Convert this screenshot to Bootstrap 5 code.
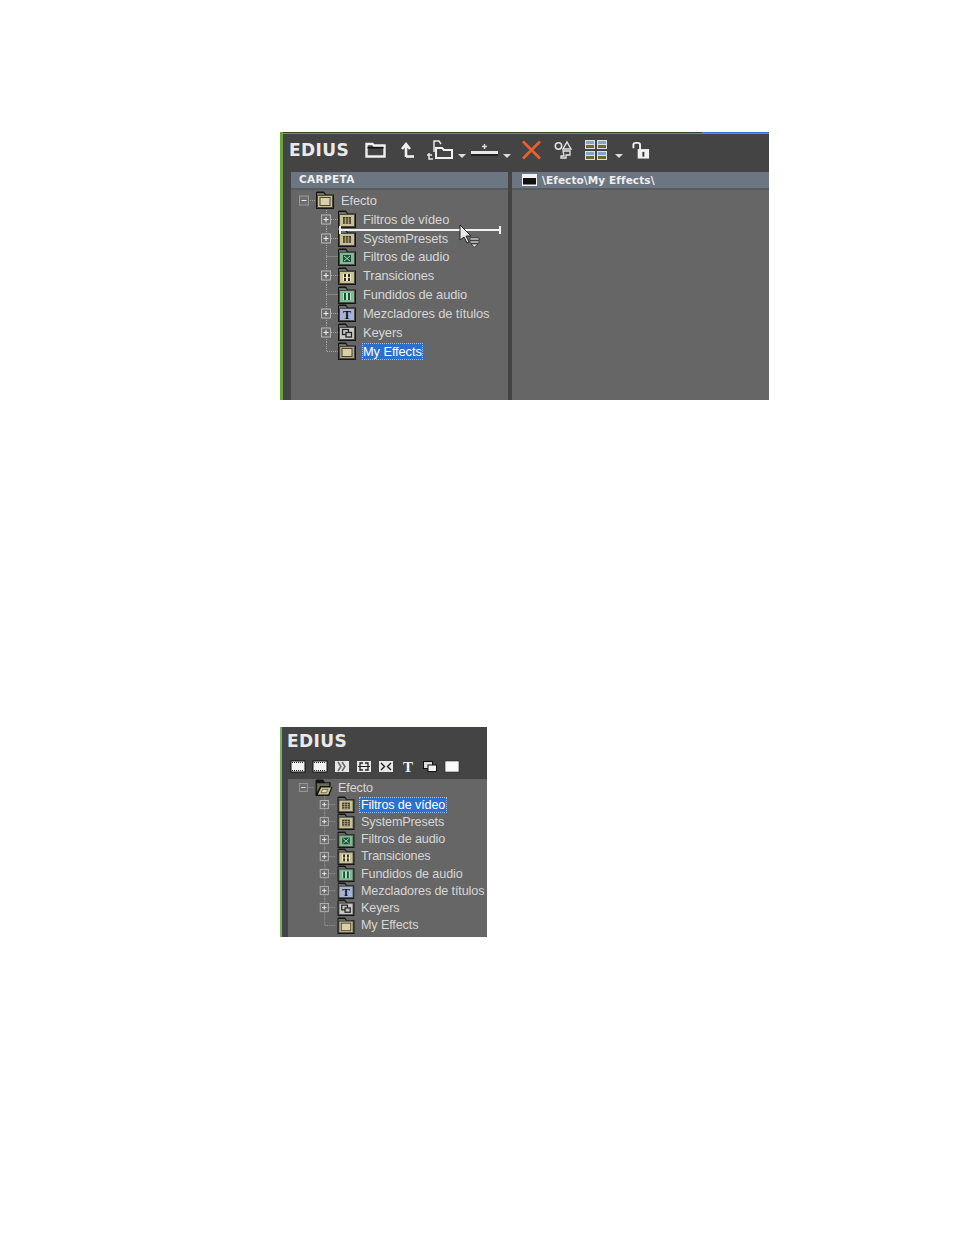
<!DOCTYPE html>
<html lang="es">
<head>
<meta charset="utf-8">
<title>EDIUS</title>
<link rel="stylesheet" href="https://cdn.jsdelivr.net/npm/bootstrap@5.3.0/dist/css/bootstrap.min.css">
<style>
body{background:#fff;margin:0;font-family:"Liberation Sans",Arial,sans-serif}
.shot{background:#444;border-left:3px solid #6aa636;margin-left:280px;overflow:hidden}
.shot-a{width:489px;height:268px;margin-top:132px}
.shot-b{width:207px;height:210px;margin-top:327px;border-left:2px solid #7fae62}
.edge{height:2px}
.edge-a{background:linear-gradient(to bottom,#3a4028 0 1px,#76955c 1px);width:100%}
.edge-a i{display:block;height:1px;width:67px;margin-left:auto;background:#2f78d0}
.edge-b{height:1px;background:#3d4a34}
.logo{font-family:"DejaVu Sans",sans-serif;font-weight:700;font-size:17px;letter-spacing:.4px;color:#eaeaea;line-height:1}
.bar-a{height:38px;padding:0 0 6px 6px}
.bar-b{height:51px}
.bar-b .logo{padding:5px 0 0 5px}
.tools-b{padding:11px 0 0 9px;gap:8px}
.tb svg{display:block;flex:none;overflow:visible}
.m1{margin-left:16px}.m2{margin-left:15px}.m3{margin-left:10px}.m4{margin-left:4px}.m5{margin-left:4px}.m6{margin-left:9px}.m7{margin-left:12px}.m8{margin-left:13px}.m9{margin-left:7px}.m10{margin-left:8px}
.drop{margin-top:11px}
.panes{height:228px;padding-left:8px;gap:4px}
.pane{background:#666;position:relative;height:100%}
.pane-l{width:217px}
.pane-r{flex:1}
.pane-head{height:18px;background:#6c7683;border-bottom:2px solid #575a5e;color:#eee;font-family:"DejaVu Sans",sans-serif;font-weight:700;font-size:10.5px;line-height:15px}
.pane-l .pane-head{padding-left:8px;letter-spacing:.35px}
.pane-r .pane-head{padding-left:10px;gap:5px;letter-spacing:.1px}
.tree-a{padding:1px 0 0 8px}
.tree-b{background:#666;height:158px;margin-left:6px;padding:0 0 0 10px}
.trow{display:flex;align-items:center;color:#d6d6d6;font-size:12.9px;white-space:nowrap;letter-spacing:-.12px}
.tree-a .trow{height:18.85px}
.tree-b .trow{height:17.2px;font-size:12.6px}
.trow svg{display:block;flex:none}
.lbl{padding:0 1.500px;margin-left:5.500px;line-height:17px}
.tree-b .lbl{margin-left:4px;padding:0 2px;line-height:16px}
.root .lbl{margin-left:5.500px}
.tree-b .root .lbl{margin-left:3px}
.sel{background:#2b6fd1;color:#fff;outline:1px dotted #9cc0ee;outline-offset:-1px}
.fc-tan{color:#c9c096}.fc-grn{color:#7fba94}.fc-blu{color:#a6b3d8}.fc-gry{color:#c8c8c8}.fc-myf{color:#a8a484}
.drag-line{position:absolute;left:48px;top:57px;width:162px;height:2px;background:#f2f2f2}
.drag-line::before,.drag-line::after{content:"";position:absolute;top:-3px;width:2px;height:8px;background:#eee}
.drag-line::before{left:0}.drag-line::after{right:0}
.drag-cur{position:absolute;left:168px;top:52px}
</style>
</head>
<body>
<svg width="0" height="0" class="d-block" aria-hidden="true">
<defs>
<symbol id="fld" viewBox="0 0 18 18">
  <path d="M0 4V1.500L1 .5h7l2 3h8v14.500H0z" fill="#141414"/>
  <path d="M1 4V2h6.500L9 4z" fill="#6d6d6d"/>
  <rect x="1" y="4" width="16" height="13" fill="#f0eedd" opacity=".25"/>
  <rect x="2" y="5" width="14" height="11" fill="currentColor"/>
</symbol>
<symbol id="fld-open" viewBox="0 0 18 18">
  <path d="M0 4V1.500L1 .5h7l2 3h6v5h2l-3.500 9.500H0z" fill="#141414"/>
  <path d="M1.500 14V4.500h13v3H5z" fill="#6e6a58"/>
  <path d="M2.500 16.500L6 9h10.500L13.500 16.500z" fill="#c9c096"/>
  <path d="M6 14.500L7.500 11h5.500l-1.500 3.500z" fill="#e2dab0" stroke="#4a4632" stroke-width=".7"/>
</symbol>
<symbol id="g-grid" viewBox="0 0 18 18"><rect x="5" y="7" width="8" height="7" fill="#3c3826"/><path d="M5.500 9h7M5.500 11h7M5.500 13h7M7.500 7v7M10.500 7v7" stroke="#c9c096" stroke-width=".6"/></symbol>
<symbol id="g-aud" viewBox="0 0 18 18"><rect x="5" y="7" width="8" height="7" fill="#1f4d38"/><path d="M6 8l6 5M12 8l-6 5" stroke="#a6dcb8" stroke-width="1"/></symbol>
<symbol id="g-tr" viewBox="0 0 18 18"><rect x="5" y="7" width="8" height="7" fill="#f3ecc8"/><path d="M7 7v7M11 7v7" stroke="#2c2818" stroke-width="2"/><path d="M5 10.500h8" stroke="#f3ecc8" stroke-width=".8"/></symbol>
<symbol id="g-fa" viewBox="0 0 18 18"><rect x="5" y="7" width="8" height="7" fill="#b8e4c6"/><path d="M7 7v7M11 7v7" stroke="#1f4d38" stroke-width="2"/></symbol>
<symbol id="g-key" viewBox="0 0 18 18"><rect x="4.500" y="6.500" width="6" height="5" fill="none" stroke="#222" stroke-width="1.300"/><rect x="8" y="9.500" width="5.500" height="4.500" fill="#c8c8c8" stroke="#222" stroke-width="1.300"/></symbol>
<symbol id="g-sq" viewBox="0 0 18 18"><rect x="4" y="6.500" width="10" height="8" fill="#d8d0a6" stroke="#4a4632"/></symbol>
<symbol id="n-plus" viewBox="0 0 39 19"><path d="M27.500 0v19M32 9.500h7" stroke="#a5a5a5" stroke-dasharray="1 1" fill="none"/><rect x="22.500" y="5" width="9" height="9" fill="#6c6c6c" stroke="#b5b5b5"/><path d="M24.500 9.500h5M27 7v5" stroke="#f0f0f0"/></symbol>
<symbol id="n-leaf" viewBox="0 0 39 19"><path d="M27.500 0v19M27.500 9.500h11.500" stroke="#a5a5a5" stroke-dasharray="1 1" fill="none"/></symbol>
<symbol id="n-last" viewBox="0 0 39 19"><path d="M27.500 0v9.500h11.500" stroke="#a5a5a5" stroke-dasharray="1 1" fill="none"/></symbol>
<symbol id="n-root" viewBox="0 0 17 19"><rect x=".5" y="5" width="9" height="9" fill="#6c6c6c" stroke="#9a9a9a"/><path d="M2.500 9.500h5" stroke="#e8e8e8"/><path d="M11 9.500h6" stroke="#a5a5a5" stroke-dasharray="1 1"/></symbol>
<symbol id="caret" viewBox="0 0 10 6"><path d="M1 1h8L5 5z" fill="#dcdcdc"/></symbol>
</defs>
</svg>

<section class="shot shot-a">
  <div class="edge edge-a"><i></i></div>
  <div class="bar-a tb d-flex align-items-center">
    <span class="logo">EDIUS</span>
    <svg class="m1" width="21" height="16" viewBox="0 0 21 16"><path d="M1.500 14.500V2h6l1.500 1.500h10.500v11z" fill="#444" stroke="#f0f0f0" stroke-width="2.400"/><rect x="2.500" y="5" width="16" height="1.500" fill="#111"/></svg>
    <svg class="m2" width="14" height="17" viewBox="0 0 14 17"><path d="M5 15V4M1 7l4-5 4 5" fill="none" stroke="#f0f0f0" stroke-width="2.600"/><path d="M5 14.500h8" stroke="#f0f0f0" stroke-width="2.600"/></svg>
    <svg class="m3" width="28" height="22" viewBox="0 0 28 22"><path d="M4 14v6h4M2 16h5" fill="none" stroke="#e8e8e8" stroke-width="1.500"/><path d="M9 13V2h5l2 3" fill="none" stroke="#e8e8e8" stroke-width="1.500"/><path d="M11 19V9h6l2 2h8v8z" fill="#444" stroke="#f0f0f0" stroke-width="2"/></svg>
    <svg class="m4 drop" width="10" height="6" viewBox="0 0 10 6"><use href="#caret"/></svg>
    <svg class="m5" width="27" height="16" viewBox="0 0 27 16"><path d="M13.500 2v5M11 4.500h5" stroke="#ddd" stroke-width="1.400"/><rect y="9" width="27" height="3" fill="#e8e8e8"/><rect y="12" width="27" height="2" fill="#222"/></svg>
    <svg class="m5 drop" width="10" height="6" viewBox="0 0 10 6"><use href="#caret"/></svg>
    <svg class="m6" width="21" height="20" viewBox="0 0 21 20"><path d="M2 1.500l17 17M19 1.500l-17 17" stroke="#e8602c" stroke-width="2.800"/></svg>
    <svg class="m7" width="18" height="18" viewBox="0 0 18 18"><circle cx="4.500" cy="5" r="3.200" fill="none" stroke="#e4e4e4" stroke-width="1.500"/><path d="M13 1l4 7h-8z" fill="#444" stroke="#e4e4e4" stroke-width="1.400"/><path d="M9 10h7v4h-4v3H7v-2h3z" fill="#444" stroke="#e4e4e4" stroke-width="1.300"/></svg>
    <svg class="m8" width="22" height="20" viewBox="0 0 22 20"><g id="gt1"><rect width="10" height="9" fill="#e0e0e0"/><rect x="1" y="1" width="8" height="3" fill="#7fa8c8"/><rect x="1" y="5" width="8" height="3" fill="#6a6a30"/></g><use href="#gt1" x="12"/><use href="#gt1" y="11"/><use href="#gt1" x="12" y="11"/></svg>
    <svg class="m9 drop" width="10" height="6" viewBox="0 0 10 6"><use href="#caret"/></svg>
    <svg class="m10" width="18" height="19" viewBox="0 0 19 19"><path d="M1.500 7V3.500q0-2 2.500-2h2q2.500 0 2.500 2V9" fill="none" stroke="#f0f0f0" stroke-width="2"/><rect x="6" y="8" width="12" height="10" fill="#f0f0f0"/><rect x="11" y="11" width="2" height="5" fill="#333"/></svg>
  </div>
  <div class="panes d-flex">
    <div class="pane pane-l">
      <div class="pane-head">CARPETA</div>
      <div class="tree-a">
        <div class="trow root"><svg width="17" height="19"><use href="#n-root"/></svg><svg class="fc-tan" width="18" height="18"><use href="#fld"/><use href="#g-sq"/></svg><span class="lbl">Efecto</span></div>
        <div class="trow"><svg width="39" height="19"><use href="#n-plus"/></svg><svg class="fc-tan" width="18" height="18"><use href="#fld"/><use href="#g-grid"/></svg><span class="lbl">Filtros de vídeo</span></div>
        <div class="trow"><svg width="39" height="19"><use href="#n-plus"/></svg><svg class="fc-tan" width="18" height="18"><use href="#fld"/><use href="#g-grid"/></svg><span class="lbl">SystemPresets</span></div>
        <div class="trow"><svg width="39" height="19"><use href="#n-leaf"/></svg><svg class="fc-grn" width="18" height="18"><use href="#fld"/><use href="#g-aud"/></svg><span class="lbl">Filtros de audio</span></div>
        <div class="trow"><svg width="39" height="19"><use href="#n-plus"/></svg><svg class="fc-tan" width="18" height="18"><use href="#fld"/><use href="#g-tr"/></svg><span class="lbl">Transiciones</span></div>
        <div class="trow"><svg width="39" height="19"><use href="#n-leaf"/></svg><svg class="fc-grn" width="18" height="18"><use href="#fld"/><use href="#g-fa"/></svg><span class="lbl">Fundidos de audio</span></div>
        <div class="trow"><svg width="39" height="19"><use href="#n-plus"/></svg><svg class="fc-blu" width="18" height="18"><use href="#fld"/><text x="9" y="15" text-anchor="middle" font-family="Liberation Serif" font-weight="700" font-size="12" fill="#111">T</text></svg><span class="lbl">Mezcladores de títulos</span></div>
        <div class="trow"><svg width="39" height="19"><use href="#n-plus"/></svg><svg class="fc-gry" width="18" height="18"><use href="#fld"/><use href="#g-key"/></svg><span class="lbl">Keyers</span></div>
        <div class="trow"><svg width="39" height="19"><use href="#n-last"/></svg><svg class="fc-myf" width="18" height="18"><use href="#fld"/><use href="#g-sq"/></svg><span class="lbl sel">My Effects</span></div>
      </div>
      <div class="drag-line"></div>
      <svg class="drag-cur" width="22" height="24" viewBox="0 0 22 24"><path d="M1 1v15l4-3 3 6 2-1-3-6h5z" fill="#e8e8e8" stroke="#222"/><path d="M11 14h9v2h-9zM11 17h9v2h-9zM12 20h7l-3.500 3z" fill="#eee" stroke="#222" stroke-width=".7"/></svg>
    </div>
    <div class="pane pane-r">
      <div class="pane-head d-flex align-items-center"><svg width="15" height="12" viewBox="0 0 15 12"><rect width="15" height="12" fill="#f2f2f2"/><rect x="1" y="4" width="13" height="6.500" fill="#111"/></svg><span>\Efecto\My Effects\</span></div>
    </div>
  </div>
</section>

<section class="shot shot-b">
  <div class="edge-b"></div>
  <div class="bar-b">
    <div class="logo">EDIUS</div>
    <div class="tools-b tb d-flex align-items-center">
      <svg width="14" height="11" viewBox="0 0 14 11"><rect width="14" height="11" fill="#f2f2f2" stroke="#111"/><path d="M1 1.500h12M1 9.500h12" stroke="#222" stroke-dasharray="1 1"/></svg>
      <svg width="14" height="11" viewBox="0 0 14 11"><rect width="14" height="11" fill="#f2f2f2" stroke="#111"/><path d="M1 1.500h12M1 9.500h12" stroke="#222" stroke-dasharray="1 1"/></svg>
      <svg width="14" height="11" viewBox="0 0 14 11"><rect width="14" height="11" fill="#e6e6e6"/><path d="M3 1l3 4.500L3 10M7 1l3 4.500L7 10" fill="none" stroke="#666" stroke-width="1.500"/></svg>
      <svg width="14" height="11" viewBox="0 0 14 11"><rect width="14" height="11" fill="#e8e8e8"/><path d="M6 2H3v7h3M8 2h3v7H8" fill="none" stroke="#222" stroke-width="1.300"/><path d="M1 5.500h12" stroke="#222"/></svg>
      <svg width="14" height="11" viewBox="0 0 14 11"><rect width="14" height="11" fill="#e8e8e8"/><path d="M2 2l3.500 3.500L2 9M12 2L8.500 5.500 12 9" fill="none" stroke="#222" stroke-width="1.400"/></svg>
      <svg width="14" height="11" viewBox="0 0 14 11"><text x="7" y="11" text-anchor="middle" font-family="Liberation Serif" font-weight="700" font-size="15" fill="#f2f2f2">T</text></svg>
      <svg width="14" height="11" viewBox="0 0 14 11"><rect x=".5" y=".5" width="9" height="7" fill="#ddd" stroke="#111"/><rect x="5" y="4" width="8.500" height="6.500" fill="#f2f2f2" stroke="#111"/></svg>
      <svg width="14" height="11" viewBox="0 0 14 11"><rect width="14" height="11" fill="#fafafa" stroke="#222" stroke-width=".6"/></svg>
    </div>
  </div>
  <div class="tree-b">
    <div class="trow root"><svg width="17" height="17"><use href="#n-root"/></svg><svg width="18" height="17"><use href="#fld-open"/></svg><span class="lbl">Efecto</span></div>
    <div class="trow"><svg width="39" height="17.200"><use href="#n-plus"/></svg><svg class="fc-tan" width="18" height="17"><use href="#fld"/><use href="#g-grid"/></svg><span class="lbl sel">Filtros de vídeo</span></div>
    <div class="trow"><svg width="39" height="17.200"><use href="#n-plus"/></svg><svg class="fc-tan" width="18" height="17"><use href="#fld"/><use href="#g-grid"/></svg><span class="lbl">SystemPresets</span></div>
    <div class="trow"><svg width="39" height="17.200"><use href="#n-plus"/></svg><svg class="fc-grn" width="18" height="17"><use href="#fld"/><use href="#g-aud"/></svg><span class="lbl">Filtros de audio</span></div>
    <div class="trow"><svg width="39" height="17.200"><use href="#n-plus"/></svg><svg class="fc-tan" width="18" height="17"><use href="#fld"/><use href="#g-tr"/></svg><span class="lbl">Transiciones</span></div>
    <div class="trow"><svg width="39" height="17.200"><use href="#n-plus"/></svg><svg class="fc-grn" width="18" height="17"><use href="#fld"/><use href="#g-fa"/></svg><span class="lbl">Fundidos de audio</span></div>
    <div class="trow"><svg width="39" height="17.200"><use href="#n-plus"/></svg><svg class="fc-blu" width="18" height="17" viewBox="0 0 18 18"><use href="#fld"/><text x="9" y="15" text-anchor="middle" font-family="Liberation Serif" font-weight="700" font-size="12" fill="#111">T</text></svg><span class="lbl">Mezcladores de títulos</span></div>
    <div class="trow"><svg width="39" height="17.200"><use href="#n-plus"/></svg><svg class="fc-gry" width="18" height="17"><use href="#fld"/><use href="#g-key"/></svg><span class="lbl">Keyers</span></div>
    <div class="trow"><svg width="39" height="17.200"><use href="#n-last"/></svg><svg class="fc-tan" width="18" height="17"><use href="#fld"/><use href="#g-sq"/></svg><span class="lbl">My Effects</span></div>
  </div>
</section>
<script src="https://cdn.jsdelivr.net/npm/bootstrap@5.3.0/dist/js/bootstrap.bundle.min.js"></script>
</body>
</html>
